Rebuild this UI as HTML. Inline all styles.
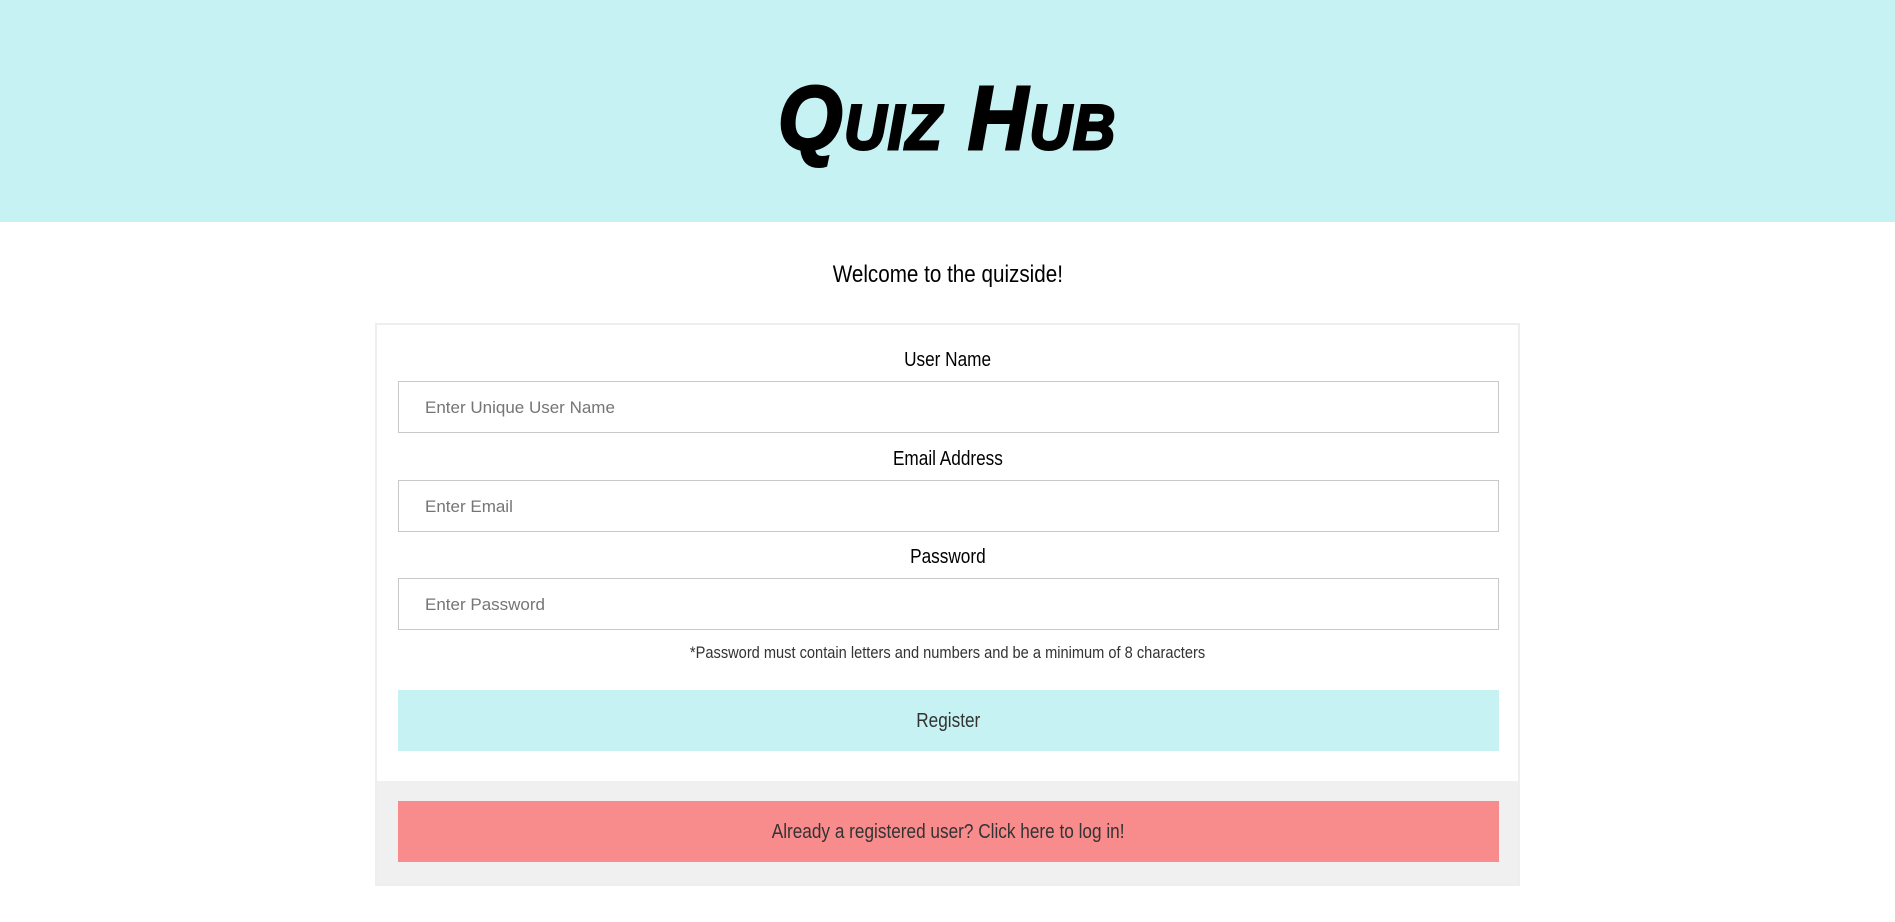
<!DOCTYPE html>
<html><head><meta charset="utf-8"><style>
*{box-sizing:border-box;margin:0;padding:0}
body{width:1895px;height:922px;background:#fff;font-family:"Liberation Sans",sans-serif;position:relative;overflow:hidden}
header{position:absolute;left:0;top:0;width:1895px;height:222px;background:#c6f2f3}
h1{position:absolute;left:0;width:100%;top:68px;text-align:center;font-family:"Liberation Sans",sans-serif;font-weight:900;font-style:italic;font-variant:small-caps;font-size:90px;letter-spacing:2px;color:#000;transform:scaleX(0.92);-webkit-text-stroke:3px #000}
.c{display:inline-block;transform:scaleX(0.86)}
.welcome{position:absolute;top:261px;width:100%;text-align:center;font-size:24px;color:#000}
.card{position:absolute;left:375px;top:323px;width:1145px;height:563px;border:2px solid #eee;background:#fff}
.lbl{position:absolute;width:100%;text-align:center;font-size:20px;color:#000}
.inp{position:absolute;left:398px;width:1101px;height:52px;border:1px solid #c8c8c8;background:#fff;font-family:"Liberation Sans",sans-serif;font-size:17px;color:#757575;padding-left:26px;line-height:51px}
.note{position:absolute;top:643px;width:100%;text-align:center;font-size:17px;color:#333}
.btn{position:absolute;left:398px;width:1101px;height:61px;text-align:center;line-height:63px;font-size:20px;color:#333}
.gray{position:absolute;left:377px;top:781px;width:1141px;height:103px;background:#f0f0f0}
</style></head><body>
<header><h1>Quiz Hub</h1></header>
<div class="welcome"><span class="c">Welcome to the quizside!</span></div>
<div class="card"></div>
<div class="lbl" style="top:349px"><span class="c">User Name</span></div>
<div class="inp" style="top:381px">Enter Unique User Name</div>
<div class="lbl" style="top:448px"><span class="c">Email Address</span></div>
<div class="inp" style="top:480px">Enter Email</div>
<div class="lbl" style="top:546px"><span class="c">Password</span></div>
<div class="inp" style="top:578px">Enter Password</div>
<div class="note"><span class="c">*Password must contain letters and numbers and be a minimum of 8 characters</span></div>
<div class="btn" style="top:690px;background:#c6f2f3"><span class="c">Register</span></div>
<div class="gray"></div>
<div class="btn" style="top:801px;background:#f88b8b"><span class="c">Already a registered user? Click here to log in!</span></div>
</body></html>
